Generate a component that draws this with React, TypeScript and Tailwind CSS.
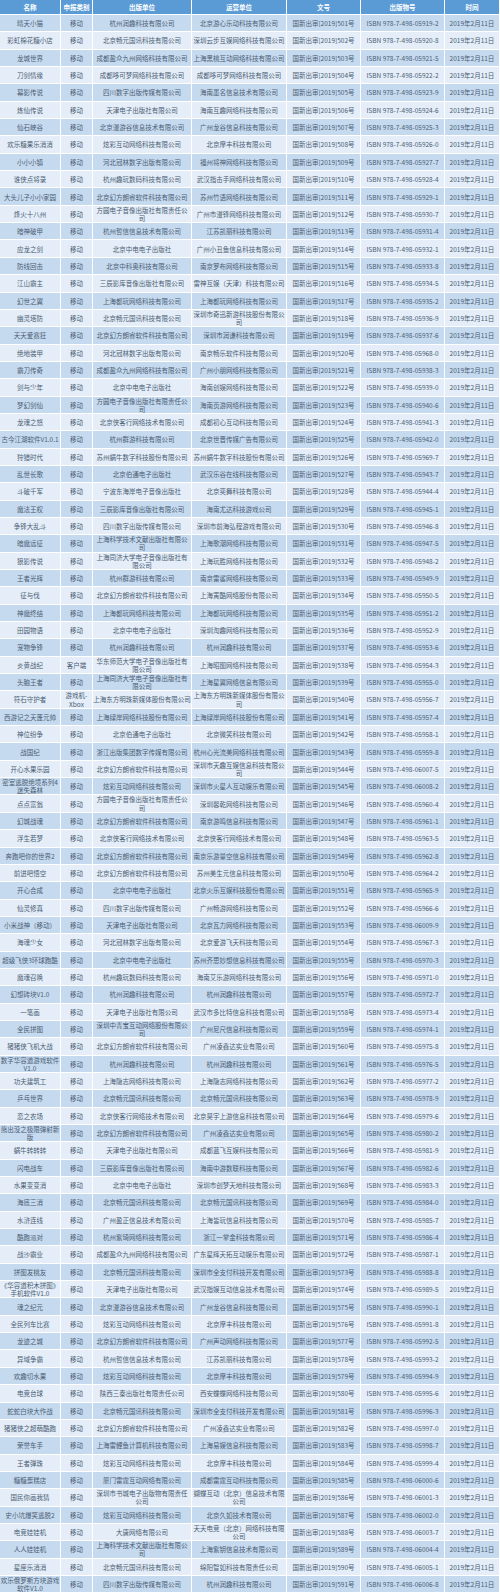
const M = "移动";
const FY = "方圆电子音像出版社有限责任公\n司";
const HF = "北京幻方朗睿软件科技有限公司";
const CY = "北京畅元国讯科技有限公司";
const XC = "炫彩互动网络科技有限公司";
const ZD = "北京中电电子出版社";

// name, category, publisher, operator, isbn suffix
const rows: [string, string, string, string, string][] = [
  ["晴天小猫", M, "杭州润趣科技有限公司", "北京游心乐动科技有限公司", "05919-2"],
  ["彩虹棉花糖小店", M, CY, "深圳云步互娱网络科技有限公司", "05920-8"],
  ["龙城世界", M, "成都盈众九州网络科技有限公司", "上海黑桃互动网络科技有限公司", "05921-5"],
  ["刀剑情缘", M, "成都哆可梦网络科技有限公司", "成都哆可梦网络科技有限公司", "05922-2"],
  ["幕影传说", M, "四川数字出版传媒有限公司", "海南墨名信息技术有限公司", "05923-9"],
  ["炼仙传说", M, "天津电子出版社有限公司", "海南互趣网络科技有限公司", "05924-6"],
  ["仙石峡谷", M, "北京漫游谷信息技术有限公司", "广州龙谷信息科技有限公司", "05925-3"],
  ["欢乐糖果乐消消", M, XC, "北京摩丰科技有限公司", "05926-0"],
  ["小小小镇", M, "河北冠林数字出版有限公司", "福州将神网络科技有限公司", "05927-7"],
  ["谁侠点将录", M, "杭州趣玩数码科技有限公司", "武汉指击手网络科技有限公司", "05928-4"],
  ["大头儿子小小家园", M, HF, "苏州竹语网络科技有限公司", "05929-1"],
  ["烽火十八州", M, FY, "广州市漫锋网络科技有限公司", "05930-7"],
  ["暗神破甲", M, "杭州哲信信息技术有限公司", "江苏凯丽科技有限公司", "05931-4"],
  ["应龙之剑", M, ZD, "广州小丑鱼信息科技有限公司", "05932-1"],
  ["防线回击", M, "北京中科奥科技有限公司", "南京罗布网络科技有限公司", "05933-8"],
  ["江山霸主", M, "三辰影库音像出版社有限公司", "雷神互娱（天津）科技有限公司", "05934-5"],
  ["幻世之翼", M, "上海都玩网络科技有限公司", "上海都玩网络科技有限公司", "05935-2"],
  ["幽灵塔防", M, CY, "深圳市奇迅新游科技股份有限公\n司", "05936-9"],
  ["天天爱赛狂", M, HF, "深圳市润谦科技有限公司", "05937-6"],
  ["绝地装甲", M, "河北冠林数字出版有限公司", "南京畅乐软件科技有限公司", "05968-0"],
  ["霸刀传奇", M, "成都盈众九州网络科技有限公司", "广州小朋网络科技有限公司", "05938-3"],
  ["剑与少年", M, ZD, "海南创娱网络科技有限公司", "05939-0"],
  ["梦幻剑仙", M, FY, "海南页游网络科技有限公司", "05940-6"],
  ["龙魂之怒", M, "北京侠客行网络技术有限公司", "成都初心互动科技有限公司", "05941-3"],
  ["古今江湖软件V1.0.1", M, "杭州群游科技有限公司", "北京世晋传媒广告有限公司", "05942-0"],
  ["狩猎时代", M, "苏州蜗牛数字科技股份有限公司", "苏州蜗牛数字科技股份有限公司", "05969-7"],
  ["乱世长歌", M, "北京伯通电子出版社", "武汉乐谷在线科技有限公司", "05943-7"],
  ["斗破千军", M, "宁波东海岸电子音像出版社", "北京奕舞科技有限公司", "05944-4"],
  ["魔法王权", M, "三辰影库音像出版社有限公司", "海南尤达科技游戏公司", "05945-1"],
  ["争锋大乱斗", M, "四川数字出版传媒有限公司", "深圳市前海弘程游戏有限公司", "05946-8"],
  ["暗魔远征", M, "上海科学技术文献出版社有限公\n司", "上海歌潮网络科技有限公司", "05947-5"],
  ["狼影传说", M, "上海同济大学电子音像出版社有\n限公司", "上海玩胜网络科技有限公司", "05948-2"],
  ["王者光辉", M, "杭州群游科技有限公司", "南京雷鲨网络科技有限公司", "05949-9"],
  ["征与伐", M, HF, "上海寅酷网络股份有限公司", "05950-5"],
  ["神魔终结", M, "上海都玩网络科技有限公司", "上海都玩网络科技有限公司", "05951-2"],
  ["田园物语", M, ZD, "深圳淘趣网络科技有限公司", "05952-9"],
  ["宠物争锋", M, "杭州润趣科技有限公司", "杭州润趣科技有限公司", "05953-6"],
  ["炎黄战纪", "客户端", "华东师范大学电子音像出版社有\n限公司", "上海昭图网络科技有限公司", "05954-3"],
  ["头脑王者", M, "上海同济大学电子音像出版社有\n限公司", "上海星翼网络信息有限公司", "05955-0"],
  ["符石守护者", "游戏机-\nXbox", "上海东方明珠新媒体股份有限公司", "上海东方明珠新媒体股份有限公\n司", "05956-7"],
  ["西游记之天蓬元帅", M, "上海绿岸网络科技股份有限公司", "上海绿岸网络科技股份有限公司", "05957-4"],
  ["神位纷争", M, "北京伯通电子出版社", "北京微笑科技有限公司", "05958-1"],
  ["战国纪", M, "浙江出版集团数字传媒有限公司", "杭州心光流美网络科技有限公司", "05959-8"],
  ["开心水果乐园", M, HF, "深圳市天趣互娱信息科技有限公\n司", "06007-5"],
  ["密室逃脱绝境系列4\n迷失森林", M, XC, "深圳市火星人互动娱乐有限公司", "06008-2"],
  ["点点富翁", M, FY, "深圳馨乾网络科技有限公司", "05960-4"],
  ["幻城战魂", M, HF, "南京游鸣信息科技有限公司", "05961-1"],
  ["浮生若梦", M, "北京侠客行网络技术有限公司", "北京侠客行网络技术有限公司", "05963-5"],
  ["奔跑吧你的世界2", M, HF, "南京乐游量空信息科技有限公司", "05962-8"],
  ["前进吧悟空", M, HF, "苏州美生元信息科技有限公司", "05964-2"],
  ["开心合成", M, ZD, "北京火乐互娱科技股份有限公司", "05965-9"],
  ["仙灵修真", M, "四川数字出版传媒有限公司", "广州畅游网络科技有限公司", "05966-6"],
  ["小米战神（移动）", M, "天津电子出版社有限公司", "北京瓦力网络科技有限公司", "06009-9"],
  ["海魂少女", M, "河北冠林数字出版有限公司", "北京爱游飞天科技有限公司", "05967-3"],
  ["超级飞侠3环球跑酷", M, ZD, "苏州齐思妙想信息科技有限公司", "05970-3"],
  ["魔魂召唤", M, "杭州趣玩数码科技有限公司", "海南艾乐游网络科技有限公司", "05971-0"],
  ["幻想砖块V1.0", M, "杭州润趣科技有限公司", "杭州润趣科技有限公司", "05972-7"],
  ["一笔画", M, "天津电子出版社有限公司", "武汉市多比特信息科技有限公司", "05973-4"],
  ["全民拼图", M, "深圳中青宝互动网络股份有限公\n司", "广州尼尺信息科技有限公司", "05974-1"],
  ["猪猪侠飞机大战", M, HF, "广州凌鑫达实业有限公司", "05975-8"],
  ["数字华容道游戏软件\nV1.0", M, "杭州润趣科技有限公司", "杭州润趣科技有限公司", "05976-5"],
  ["功夫建筑工", M, "上海隐志网络科技有限公司", "上海隐志网络科技有限公司", "05977-2"],
  ["乒乓世界", M, CY, CY, "05978-9"],
  ["恋之农场", M, "北京侠客行网络技术有限公司", "北京昊宇上游信息科技有限公司", "05979-6"],
  ["熊出没之极限弹射新\n版", M, HF, "广州凌鑫达实业有限公司", "05980-2"],
  ["蜗牛转转转", M, "天津电子出版社有限公司", "成都蓝飞互娱科技有限公司", "05981-9"],
  ["闪电战车", M, "三辰影库音像出版社有限公司", "海南中游数联科技有限公司", "05982-6"],
  ["水果变变消", M, ZD, "深圳市创梦天地科技有限公司", "05983-3"],
  ["海底三消", M, CY, CY, "05984-0"],
  ["水浒连线", M, "广州盈正信息技术有限公司", "上海皆玩信息科技有限公司", "05985-7"],
  ["酷跑派对", M, "杭州紫琦网络科技有限公司", "浙江一掌金科技有限公司", "05986-4"],
  ["战沙霸业", M, "成都盈众九州网络科技有限公司", "广东星辉天拓互动娱乐有限公司", "05987-1"],
  ["拼图发桃友", M, CY, "深圳市全支付科技开发有限公司", "05988-8"],
  ["《华容道积木拼图》\n手机软件V1.0", M, "天津电子出版社有限公司", "武汉指娱互动信息技术有限公司", "05989-5"],
  ["魂之纪元", M, "北京漫游谷信息技术有限公司", "广州龙谷信息科技有限公司", "05990-1"],
  ["全民列车比赛", M, XC, "北京摩丰科技有限公司", "05991-8"],
  ["龙迹之城", M, HF, "广州声动网络科技有限公司", "05992-5"],
  ["异域争霸", M, "杭州哲信信息技术有限公司", "江苏凯丽科技有限公司", "05993-2"],
  ["欢趣切水果", M, XC, "北京摩丰科技有限公司", "05994-9"],
  ["电竞台球", M, "陕西三秦出版社有限责任公司", "西安蝶蝶网络科技有限公司", "05995-6"],
  ["蛇蛇白块大作战", M, CY, "深圳市全支付科技开发有限公司", "05996-3"],
  ["猪猪侠之超萌酷跑", M, HF, "广州凌鑫达实业有限公司", "05997-0"],
  ["荣誉车手", M, "上海雷鲤鱼计算机科技有限公司", "上海易娱信息科技有限公司", "05998-7"],
  ["王者弹珠", M, XC, "北京摩丰科技有限公司", "05999-4"],
  ["糖糖蛋糕店", M, "厦门雷霆互动网络有限公司", "成都雷霆互动科技有限公司", "06000-6"],
  ["国民你画我猜", M, "深圳市书城电子出版物有限责任\n公司", "蝴蝶互动（北京）信息技术有限\n公司", "06001-3"],
  ["史小坑爆笑逃脱2", M, XC, "北京久如技术有限公司", "06002-0"],
  ["电竞娃娃机", M, "大唐网络有限公司", "天天电竞（北京）网络科技有限\n公司", "06003-7"],
  ["人人娃娃机", M, "上海科学技术文献出版社有限公\n司", "上海紫钥信息技术有限公司", "06004-4"],
  ["星座乐消消", M, CY, "绵阳智如科技有限责任公司", "06005-1"],
  ["欢乐俄罗斯方块游戏\n软件V1.0", M, "四川数字出版传媒有限公司", "杭州润趣科技有限公司", "06006-8"],
];

const headers = ["名称", "申报类别", "出版单位", "运营单位", "文号", "出版物号", "时间"];

const cols = "grid grid-cols-[61px_32px_99px_95px_74px_84px_55px]";
const cell =
  "flex items-center justify-center text-center whitespace-pre border-r border-b border-white overflow-hidden";

export default function App() {
  return (
    <div className="w-[500px] bg-white font-['Noto_Sans_CJK_SC','Noto_Sans',sans-serif] text-[6.5px] leading-[8.2px]">
      <div className={`${cols} h-[15px] bg-[#5b9bd5] text-white font-bold`}>
        {headers.map((h) => (
          <div key={h} className={cell}>
            {h}
          </div>
        ))}
      </div>

      {rows.map((r, i) => {
        const bg = i % 2 === 0 ? "bg-[#c6daef]" : "bg-[#e4edf8]";
        const cells = [
          r[0],
          r[1],
          r[2],
          r[3],
          `国新出审[2019]${501 + i}号`,
          `ISBN 978-7-498-${r[4]}`,
          "2019年2月11日",
        ];
        return (
          <div key={i} className={`${cols} h-[17.35px] ${bg} text-[#4a5d74]`}>
            {cells.map((c, j) => (
              <div key={j} className={cell}>
                {c}
              </div>
            ))}
          </div>
        );
      })}
    </div>
  );
}
